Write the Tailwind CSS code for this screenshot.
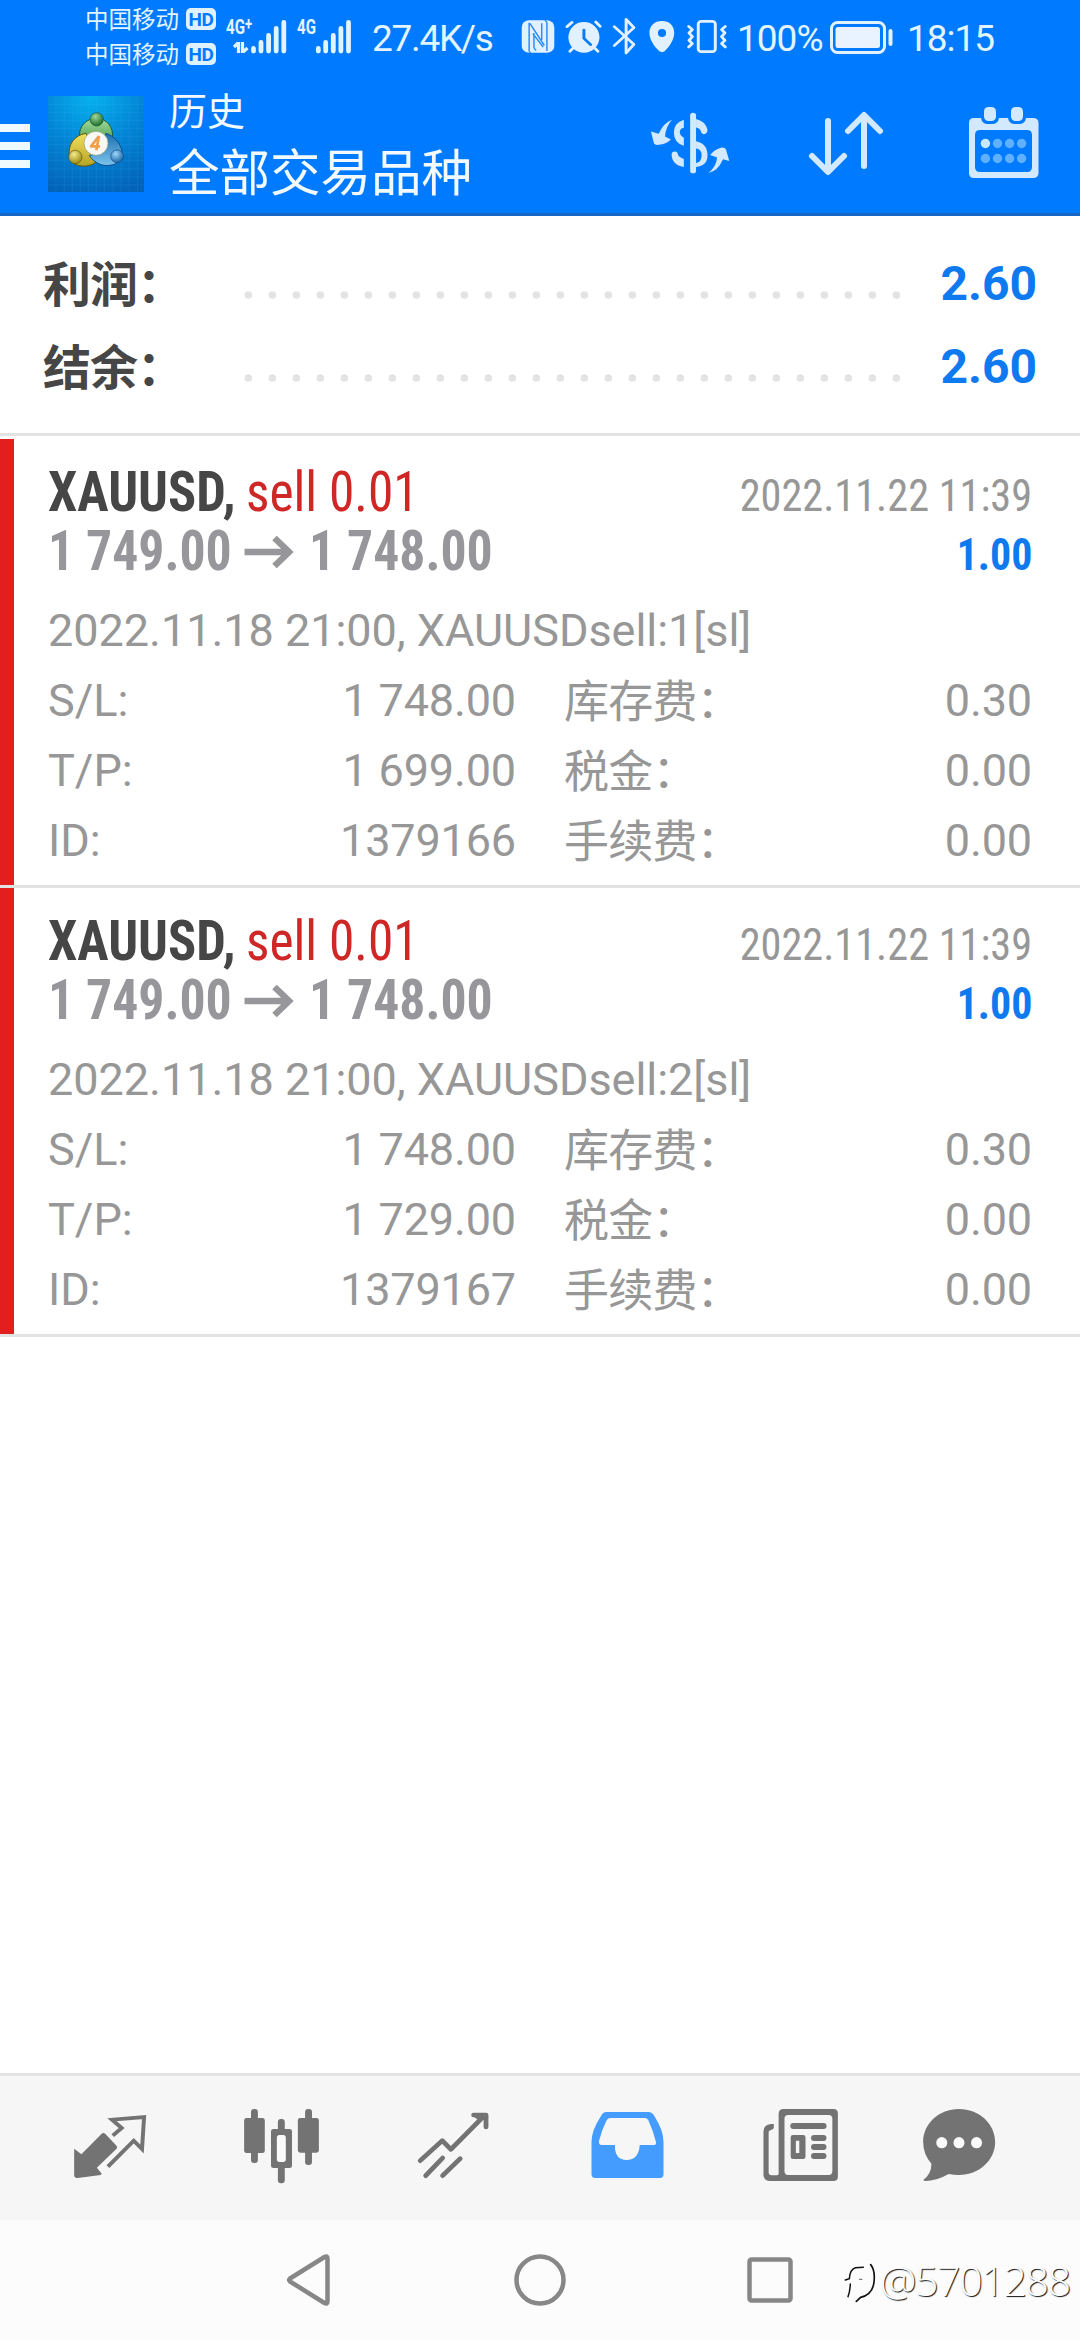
<!DOCTYPE html>
<html lang="zh-CN">
<head>
<meta charset="utf-8">
<title>历史</title>
<script src="https://cdn.jsdelivr.net/npm/@tailwindcss/browser@4"></script>
</head>
<body class="w-[1080px] h-[2340px] overflow-hidden bg-white flex flex-col font-['Roboto','Noto_Sans_CJK_SC',sans-serif]">

<header class="h-[216px] shrink-0 bg-[#007aff] border-b-[3px] border-[#1467c4] flex flex-col">
  <!-- status bar -->
  <div class="h-[74px] flex items-center pl-[85px] text-[#e2f4ff]">
    <div class="flex flex-col w-[131px] pb-[2px]">
      <div class="h-[35px] flex items-center justify-between"><span class="text-[23.5px] leading-[30px] pb-[2px] font-['Noto_Sans_CJK_SC',sans-serif] whitespace-nowrap">中国移动</span><span class="w-[30px] h-[22px] rounded-[5px] bg-[#dff1ff] text-[#007aff] text-[19px] leading-[23px] font-bold text-center tracking-[-0.5px]">HD</span></div>
      <div class="h-[35px] flex items-center justify-between"><span class="text-[23.5px] leading-[30px] pb-[2px] font-['Noto_Sans_CJK_SC',sans-serif] whitespace-nowrap">中国移动</span><span class="w-[30px] h-[22px] rounded-[5px] bg-[#dff1ff] text-[#007aff] text-[19px] leading-[23px] font-bold text-center tracking-[-0.5px]">HD</span></div>
    </div>
    <div class="relative ml-[10px] w-[62px] h-[38px]">
      <span class="absolute left-0 top-0 text-[21px] leading-[19px] font-bold origin-left scale-x-[0.72] whitespace-nowrap">4G<sup class="text-[18px] leading-0 -top-[4px]">+</sup></span>
      <svg class="absolute left-0 top-0 w-[62px] h-[38px]" viewBox="225 17 62 38" fill="none" stroke="#e2f4ff" stroke-width="4.8" stroke-linecap="round"><path d="M252.5 47.5v2.5M260 41.5v8.5M267.6 34.5v15.5M275.2 27.5v22.500M282.800 21.500v28.500"/><path d="M237.500 41v11M233 46l4-4M241.500 41v11M246.500 47l-4.500 4" stroke-width="3.200" stroke-linecap="butt"/></svg>
    </div>
    <div class="relative ml-[9px] w-[56px] h-[38px]">
      <span class="absolute left-0 top-0 text-[21px] leading-[19px] font-bold origin-left scale-x-[0.72] whitespace-nowrap">4G</span>
      <svg class="absolute left-0 top-0 w-[56px] h-[38px]" viewBox="296 17 56 38" fill="none" stroke="#e2f4ff" stroke-width="4.8" stroke-linecap="round"><path d="M317.300 47.500v2.500M324.700 41.500v8.500M332.300 34.500v15.500M339.900 27.500v22.500M347.500 21.500v28.500"/></svg>
    </div>
    <span class="ml-[19px] w-[149px] pt-[3px] text-[37px] leading-[44px] tracking-[-1.300px] whitespace-nowrap">27.4K/s</span>
    <!-- indicator icons -->
    <svg class="w-[208px] h-[40px] shrink-0" viewBox="56 51 562 120" preserveAspectRatio="none" fill="#e2f1ff">
      <rect x="58" y="61" width="88" height="97" rx="20"/>
      <path d="M78 68v84q0 5 5 6M80 70l39 66M126 153V68q0-5-6-7" fill="none" stroke="#2a8dfa" stroke-width="4"/>
      <path d="M88 101l28 40M91 99v42q0 6 6 10M112 70v50" fill="none" stroke="#2a8dfa" stroke-width="4"/>
      <ellipse cx="226" cy="112" rx="42" ry="46"/>
      <path d="M180 80l14-13M258 66l12 13M196 145l-8 9M256 145l8 9" stroke="#e2f1ff" stroke-width="8" stroke-linecap="round"/>
      <path d="M226 90v25l18 19" stroke="#087cf6" stroke-width="8" fill="none" stroke-linecap="round"/>
      <path d="M308 80l53 53-21 26V58l21 25-53 54" fill="none" stroke="#e2f1ff" stroke-width="8" stroke-linecap="round" stroke-linejoin="round"/>
      <path d="M437 63c-20 0-34 14-34 35 0 20 12 40 27 56q7 5 14 0c14-16 26-36 26-56 0-21-13-35-33-35zm0 24a11 12 0 1 1 0 24 11 12 0 0 1 0-24z" fill-rule="evenodd"/>
      <rect x="535" y="64" width="46" height="91" rx="8" fill="none" stroke="#e2f1ff" stroke-width="8"/>
      <path d="M509 79l10 10-9 10 9 11-9 11 9 10-10 10M608 79l-10 10 9 10-9 11 9 11-9 10 10 10" fill="none" stroke="#e2f1ff" stroke-width="8" stroke-linecap="round" stroke-linejoin="round"/>
    </svg>
    <span class="ml-[8px] w-[92px] pt-[3px] text-[37px] leading-[44px] tracking-[-1px] whitespace-nowrap">100%</span>
    <svg class="w-[64px] h-[34px]" viewBox="829 19 64 34"><rect x="831.500" y="21.500" width="53" height="30" rx="6" fill="none" stroke="#e2f1ff" stroke-width="3"/><rect x="835.500" y="26" width="44.500" height="21" rx="2.500" fill="#e8f3ff"/><rect x="888.500" y="28" width="4" height="17" rx="2" fill="#e2f1ff"/></svg>
    <span class="ml-[14px] pt-[3px] text-[37px] leading-[44px] tracking-[-1px] whitespace-nowrap">18:15</span>
  </div>

  <!-- app bar -->
  <div class="h-[139px] flex text-[#f2faff]">
    <div class="w-[30px] mt-[50px] flex flex-col gap-[10px]"><i class="h-[8px] bg-[#eefaff]"></i><i class="h-[8px] bg-[#eefaff]"></i><i class="h-[8px] bg-[#eefaff]"></i></div>
    <svg class="ml-[18px] mt-[22px] w-[96px] h-[96px]" viewBox="54 48 288 288">
      <defs>
        <radialGradient id="bg" cx=".45" cy="0" r="1.050"><stop offset="0" stop-color="#05b2f0"/><stop offset=".5" stop-color="#0385d6"/><stop offset="1" stop-color="#0263b8"/></radialGradient>
        <linearGradient id="g" x2="0" y2="1"><stop offset="0" stop-color="#a6dc9e"/><stop offset="1" stop-color="#2f8a35"/></linearGradient>
        <linearGradient id="y" x2="0" y2="1"><stop offset="0" stop-color="#f1e05c"/><stop offset="1" stop-color="#b7a324"/></linearGradient>
        <linearGradient id="b" x2="0" y2="1"><stop offset="0" stop-color="#1f6fae"/><stop offset="1" stop-color="#7cc4ee"/></linearGradient>
        <radialGradient id="gs" cx=".4" cy=".3" r=".7"><stop offset="0" stop-color="#9fd69a"/><stop offset="1" stop-color="#1c6e2a"/></radialGradient>
        <radialGradient id="ys" cx=".4" cy=".3" r=".7"><stop offset="0" stop-color="#f6ec8c"/><stop offset="1" stop-color="#9c8a12"/></radialGradient>
        <radialGradient id="bs" cx=".4" cy=".3" r=".7"><stop offset="0" stop-color="#9fd8fa"/><stop offset="1" stop-color="#1b66a8"/></radialGradient>
      </defs>
      <rect x="54" y="48" width="288" height="288" fill="url(#bg)"/>
      <path d="M78 48v288M103 48v288M127 48v288M151 48v288M176 48v288M200 48v288M224 48v288M249 48v288M273 48v288M297 48v288M322 48v288M54 73h288M54 97h288M54 121h288M54 145h288M54 170h288M54 194h288M54 218h288M54 242h288M54 267h288M54 291h288M54 315h288" stroke="#5ec8ff" stroke-opacity=".16" stroke-width="2"/>
      <path d="M149 170c-4-30 20-55 50-55s54 26 48 62l-13 30-70-20z" fill="url(#g)" stroke="#155c3c" stroke-width="3"/>
      <path d="M168 160c-35 5-55 35-50 68 2 14 8 20 16 24 20 10 45 8 62-4l-10-50z" fill="url(#y)" stroke="#5c5a12" stroke-width="3"/>
      <path d="M228 160c28 10 50 35 49 68-1 20-30 31-55 28-20-3-38-18-44-30l40-10z" fill="url(#b)" stroke="#0d4f8c" stroke-width="3"/>
      <circle cx="200" cy="118" r="20" fill="url(#gs)" stroke="#155c3c" stroke-width="2"/>
      <circle cx="136" cy="231" r="20" fill="url(#ys)" stroke="#5c5a12" stroke-width="2"/>
      <circle cx="261" cy="229" r="19" fill="url(#bs)" stroke="#0d4f8c" stroke-width="2"/>
      <circle cx="198" cy="190" r="36" fill="#f8f8f4" stroke="#8f9a70" stroke-width="2"/>
      <path d="M207 168l-24 31h27M207 168l-8 43" fill="none" stroke="#f0a04c" stroke-width="8" stroke-linejoin="round"/>
    </svg>
    <div class="ml-[25px] flex flex-col whitespace-nowrap font-['Noto_Sans_CJK_SC',sans-serif]">
      <span class="mt-[13px] text-[38px] leading-[44px]">历史</span>
      <span class="mt-[10px] text-[50.500px] leading-[56px]">全部交易品种</span>
    </div>
    <svg class="ml-auto mt-[35px] w-[85px] h-[67px]" viewBox="400 325 230 200" preserveAspectRatio="none" fill="#d3e9ff">
      <path d="M514 344q0-8 8-8t8 8v165q0 8-8 8t-8-8z"/>
      <path d="M497 357q-27 10-27 38 0 31 27 40v-24q-11-6-11-17t11-13zM464 460q0-8 9-8 7 0 8 9 3 9 16 13v24q-33-6-33-38z"/>
      <path d="M530 355q24 6 31 31 0 13-10 14-7 0-8-9-3-9-13-11zM530 421q31 7 31 42 0 32-31 35v-12q15-2 15-22t-15-21z"/>
      <path d="M465 357q-22 8-36 42l-21-7 8 35q3 7 13 5 20-2 33-16l-16-9q2-30 19-50zM563 516q22-18 24-46l-19-8q12-16 31-22 9-1 12 6l9 34-17-5q-14 36-40 41z"/>
    </svg>
    <svg class="ml-[73px] mt-[35px] w-[80px] h-[70px]" viewBox="806 109 80 70" fill="none" stroke="#d3e9ff" stroke-width="6" stroke-linecap="round" stroke-linejoin="round"><path d="M828 121v50.500M812 156l16 16 16-16M864 166v-50.500M848 131l16-16 16 16"/></svg>
    <svg class="ml-[81px] mr-[39px] mt-[31px] w-[74px] h-[74px]" viewBox="966 105 74 74">
      <path d="M973 118h7q1 6 7 6h4q6 0 7-6h9q1 6 7 6h4q6 0 7-6h7q5.500 0 5.500 5v50q0 5-5.500 5h-59q-5 0-5-5v-50q0-5 5-5zm6 12q-5 0-5 5v32q0 5 5 5h47q5 0 5-5v-32q0-5-5-5z" fill="#d3e9ff" fill-rule="evenodd"/>
      <rect x="983" y="107" width="12" height="14" rx="4.500" fill="#d3e9ff"/><rect x="1010" y="107" width="12" height="14" rx="4.500" fill="#d3e9ff"/>
      <circle cx="984.400" cy="143.500" r="4.700" fill="#c8e8ff"/>
      <g fill="#5fb0ff"><circle cx="996.500" cy="143.500" r="4.700"/><circle cx="1008.600" cy="143.500" r="4.700"/><circle cx="1020.600" cy="143.500" r="4.700"/><circle cx="984.400" cy="158.500" r="4.700"/><circle cx="996.500" cy="158.500" r="4.700"/><circle cx="1008.600" cy="158.500" r="4.700"/><circle cx="1020.600" cy="158.500" r="4.700"/></g>
    </svg>
  </div>
</header>

<main class="flex-1 bg-white text-[#979797]">
  <section class="h-[220px] border-b-[3px] border-[#e3e3e3] pt-[26px] pl-[43px] pr-[43px] font-bold text-[48px]">
    <div class="h-[83px] flex items-center">
      <span class="w-[201px] pb-[5px] leading-[60px] tracking-[-1px] text-[#464646] whitespace-nowrap font-['Noto_Sans_CJK_SC',sans-serif]">利润：</span>
      <svg class="w-[656px] h-[8px] mt-[22px]" viewBox="0 0 656 8"><path d="M4.300 4H653" stroke="#e3e3e3" stroke-width="7.600" stroke-linecap="round" stroke-dasharray="0 24"/></svg>
      <span class="ml-auto leading-[60px] text-[#0f7af0]">2.60</span>
    </div>
    <div class="h-[83px] flex items-center">
      <span class="w-[201px] pb-[5px] leading-[60px] tracking-[-1px] text-[#464646] whitespace-nowrap font-['Noto_Sans_CJK_SC',sans-serif]">结余：</span>
      <svg class="w-[656px] h-[8px] mt-[22px]" viewBox="0 0 656 8"><path d="M4.300 4H653" stroke="#e3e3e3" stroke-width="7.600" stroke-linecap="round" stroke-dasharray="0 24"/></svg>
      <span class="ml-auto leading-[60px] text-[#0f7af0]">2.60</span>
    </div>
  </section>

  <article class="mt-[3px] h-[449px] border-b-[3px] border-[#e3e3e3] flex">
    <div class="w-[14px] bg-[#e31e1e]"></div>
    <div class="flex-1 pt-[24px] pl-[34px] pr-[48px]">
      <div class="h-[59px] flex items-baseline justify-between leading-[59px] whitespace-nowrap font-['Roboto_Condensed','Roboto',sans-serif] font-stretch-condensed">
        <div class="text-[55px]"><b class="inline-block origin-left scale-x-[0.953] -mr-[12px] text-[#464646]">XAUUSD,</b> <span class="inline-block origin-left scale-x-[0.935] text-[#cf2626]">sell 0.01</span></div>
        <span class="text-[45px] origin-right scale-x-[0.94]">2022.11.22 11:39</span>
      </div>
      <div class="h-[59px] flex items-baseline justify-between leading-[59px] font-bold whitespace-nowrap font-['Roboto_Condensed','Roboto',sans-serif] font-stretch-condensed text-[#97979b]">
        <div class="text-[55px] flex items-center"><span class="origin-left scale-x-[0.94]">1 749.00</span><svg class="mr-[14px] w-[52px] h-[36px]" viewBox="244 534 52 36" fill="none" stroke="#97979b" stroke-width="6.500"><path d="M245.500 552h45M275.500 538l14.500 14-14.500 14"/></svg><span class="origin-left scale-x-[0.94]">1 748.00</span></div>
        <span class="text-[45px] origin-right scale-x-[0.93] text-[#0f7af0]">1.00</span>
      </div>
      <div class="mt-[15px] h-[70px] text-[45px] leading-[70px] tracking-[-0.030px] whitespace-nowrap">2022.11.18 21:00, XAUUSDsell:1[sl]</div>
      <div class="grid grid-cols-2 gap-x-[48px] text-[45px] leading-[70px] whitespace-nowrap">
        <div class="h-[70px] flex justify-between"><span>S/L:</span><span class="tracking-[-0.150px]">1 748.00</span></div>
        <div class="h-[70px] flex justify-between"><span class="pt-[2px] tracking-[-0.800px]">库存费：</span><span class="tracking-[-0.150px]">0.30</span></div>
        <div class="h-[70px] flex justify-between"><span>T/P:</span><span class="tracking-[-0.150px]">1 699.00</span></div>
        <div class="h-[70px] flex justify-between"><span class="pt-[2px] tracking-[-0.800px]">税金：</span><span class="tracking-[-0.150px]">0.00</span></div>
        <div class="h-[70px] flex justify-between"><span>ID:</span><span class="tracking-[-0.150px]">1379166</span></div>
        <div class="h-[70px] flex justify-between"><span class="pt-[2px] tracking-[-0.800px]">手续费：</span><span class="tracking-[-0.150px]">0.00</span></div>
      </div>
    </div>
  </article>

  <article class="h-[449px] border-b-[3px] border-[#e3e3e3] flex">
    <div class="w-[14px] bg-[#e31e1e]"></div>
    <div class="flex-1 pt-[24px] pl-[34px] pr-[48px]">
      <div class="h-[59px] flex items-baseline justify-between leading-[59px] whitespace-nowrap font-['Roboto_Condensed','Roboto',sans-serif] font-stretch-condensed">
        <div class="text-[55px]"><b class="inline-block origin-left scale-x-[0.953] -mr-[12px] text-[#464646]">XAUUSD,</b> <span class="inline-block origin-left scale-x-[0.935] text-[#cf2626]">sell 0.01</span></div>
        <span class="text-[45px] origin-right scale-x-[0.94]">2022.11.22 11:39</span>
      </div>
      <div class="h-[59px] flex items-baseline justify-between leading-[59px] font-bold whitespace-nowrap font-['Roboto_Condensed','Roboto',sans-serif] font-stretch-condensed text-[#97979b]">
        <div class="text-[55px] flex items-center"><span class="origin-left scale-x-[0.94]">1 749.00</span><svg class="mr-[14px] w-[52px] h-[36px]" viewBox="244 534 52 36" fill="none" stroke="#97979b" stroke-width="6.500"><path d="M245.500 552h45M275.500 538l14.500 14-14.500 14"/></svg><span class="origin-left scale-x-[0.94]">1 748.00</span></div>
        <span class="text-[45px] origin-right scale-x-[0.93] text-[#0f7af0]">1.00</span>
      </div>
      <div class="mt-[15px] h-[70px] text-[45px] leading-[70px] tracking-[-0.030px] whitespace-nowrap">2022.11.18 21:00, XAUUSDsell:2[sl]</div>
      <div class="grid grid-cols-2 gap-x-[48px] text-[45px] leading-[70px] whitespace-nowrap">
        <div class="h-[70px] flex justify-between"><span>S/L:</span><span class="tracking-[-0.150px]">1 748.00</span></div>
        <div class="h-[70px] flex justify-between"><span class="pt-[2px] tracking-[-0.800px]">库存费：</span><span class="tracking-[-0.150px]">0.30</span></div>
        <div class="h-[70px] flex justify-between"><span>T/P:</span><span class="tracking-[-0.150px]">1 729.00</span></div>
        <div class="h-[70px] flex justify-between"><span class="pt-[2px] tracking-[-0.800px]">税金：</span><span class="tracking-[-0.150px]">0.00</span></div>
        <div class="h-[70px] flex justify-between"><span>ID:</span><span class="tracking-[-0.150px]">1379167</span></div>
        <div class="h-[70px] flex justify-between"><span class="pt-[2px] tracking-[-0.800px]">手续费：</span><span class="tracking-[-0.150px]">0.00</span></div>
      </div>
    </div>
  </article>
</main>

<nav class="h-[147px] shrink-0 border-t-[3px] border-[#e2e2e2] bg-[#f6f6f6] flex items-start pt-[29px] pl-[69px]">
  <svg class="w-[83px] h-[80px] shrink-0" viewBox="200 135 241 240" preserveAspectRatio="none" fill="#737373">
    <path d="M215 266l21 17 59-62q5-4 10 0l33 36q4 4 0 9l-57 57 14 18-3 4-67 9q-10 1-10-9z"/>
    <path d="M327 227l26-23-28-25 93-8-6 96-24-25-75 78" fill="none" stroke="#737373" stroke-width="11.500"/>
  </svg>
  <svg class="ml-[88px] w-[83px] h-[80px] shrink-0" viewBox="697 135 241 240" preserveAspectRatio="none" fill="#737373">
    <rect x="729" y="147" width="20" height="162" rx="9"/><rect x="709" y="174" width="60" height="105" rx="7"/>
    <rect x="886" y="147" width="20" height="168" rx="9"/><rect x="865" y="174" width="61" height="104" rx="7"/>
    <rect x="807" y="177" width="20" height="60" rx="9"/><rect x="807" y="300" width="20" height="70" rx="9"/>
    <path d="M794 207h47q7 0 7 7v103q0 7-7 7h-47q-7 0-7-7V214q0-7 7-7z"/><rect x="804" y="225" width="26" height="81" rx="8" fill="#fafafa"/>
  </svg>
  <svg class="ml-[90px] w-[83px] h-[80px] shrink-0" viewBox="1200 135 241 240" preserveAspectRatio="none" fill="none" stroke="#737373" stroke-width="14" stroke-linecap="round" stroke-linejoin="round"><path d="M1221 302l64-60 25 26 95-99M1376 165h36v36M1237 347l49-53M1286 347l51-51" /><path d="M1374 165h30l-14 12z" stroke-width="5" fill="#737373"/></svg>
  <svg class="ml-[90px] w-[83px] h-[80px] shrink-0" viewBox="131 135 241 240" preserveAspectRatio="none" fill="#449cff"><path d="M190 156h122q11 0 17 11 27 44 27 78v98q0 11-10 11H158q-11 0-11-11v-98q0-34 28-78 5-11 15-11zm13 18q-8 0-12 7-14 28-22 61-2 13 8 13h38q-1 45 34 45t38-45h40q9 0 7-10-7-30-22-64-3-7-11-7z" fill-rule="evenodd"/></svg>
  <svg class="ml-[90px] w-[83px] h-[80px] shrink-0" viewBox="634 135 241 240" preserveAspectRatio="none" fill="#737373">
    <path d="M705 147h145q13 0 13 13v190q0 13-13 13H665q-18-1-18-18V214q0-20 22-22h8v13l-7 5q-8 0-8 8v119q0 9 9 9h14q6 0 6-5V162q0-15 14-15zm14 18q-11 0-11 11v158q0 11 11 11h117q11 0 11-11V176q0-11-11-11z" fill-rule="evenodd"/>
    <rect x="725" y="189" width="105" height="18" rx="8"/><path d="M733 225h29q7 0 7 7v58q0 7-7 7h-29q-7 0-7-7v-58q0-7 7-7zm8 17v37h10v-37z" fill-rule="evenodd"/>
    <rect x="785" y="225" width="45" height="18" rx="9"/><rect x="785" y="252" width="45" height="18" rx="9"/><rect x="785" y="279" width="45" height="18" rx="9"/>
  </svg>
  <svg class="ml-[76px] w-[83px] h-[80px] shrink-0" viewBox="1094 135 241 240" preserveAspectRatio="none"><path d="M1213 147c58 0 105 44 105 99s-47 99-105 99q-15 0-30-3-35 21-69 21-5-1-4-4 23-18 23-48-24-28-24-65c0-55 46-99 104-99z" fill="#737373"/><g fill="#fafafa"><ellipse cx="1163" cy="248" rx="16" ry="17"/><ellipse cx="1213" cy="248" rx="16" ry="17"/><ellipse cx="1264" cy="248" rx="16" ry="17"/></g></svg>
</nav>

<!-- system navigation -->
<footer class="relative h-[120px] shrink-0 bg-[#fcfcfc] flex items-start pt-[32px] pl-[286px]">
  <svg class="w-[46px] h-[56px]" viewBox="286 2252 46 56" fill="none" stroke="#878787" stroke-width="4.500" stroke-linejoin="round"><path d="M290 2278.500q-1.500 1.500 0 3l34.500 21.500q3 1.500 3-1.500v-43q0-3-3-1.500z"/></svg>
  <svg class="ml-[181px] w-[54px] h-[56px]" viewBox="513 2252 54 56" fill="none" stroke="#878787" stroke-width="4.500"><circle cx="540" cy="2280" r="23.500"/></svg>
  <svg class="ml-[178px] w-[50px] h-[56px]" viewBox="744 2252 50 56" fill="none" stroke="#878787" stroke-width="4.500"><rect x="748.500" y="2259.500" width="41" height="41" rx="2"/></svg>
  <div class="absolute left-[843px] top-[36px] flex items-center">
    <svg class="w-[37px] h-[48px]" viewBox="39 54 111 144" fill="none" stroke="#111" stroke-linecap="round" stroke-width="4.500"><path d="M46 126l12-4q2-28 18-33l24-1M61 138q-1 22-7 38"/><path d="M122 80q14 16 10 52-4 38-40 46l-13 12" stroke-width="5"/><path d="M88 124h8" stroke-width="2"/></svg>
    <span class="text-[41px] leading-[48px] text-white font-['Open_Sans',sans-serif] font-light tracking-[-1.300px] whitespace-nowrap [text-shadow:1px_1px_1px_#111]">@5701288</span>
  </div>
</footer>
</body>
</html>
